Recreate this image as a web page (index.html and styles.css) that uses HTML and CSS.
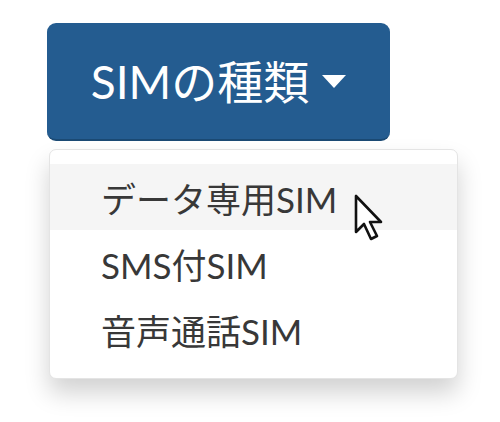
FILE: index.html
```html
<!DOCTYPE html>
<html lang="ja">
<head>
<meta charset="utf-8">
<link rel="stylesheet" href="styles.css">
</head>
<body>
<div class="dropdown">
  <button class="toggle">SIMの種類<span class="caret"></span></button>
  <ul class="menu">
    <li class="item active">データ専用SIM
      <svg class="cursor" width="34" height="52" viewBox="0 0 17 26"><path d="M1 1 L1 19 L5 15 L8.5 22.5 L11.5 21 L8 14 L13.5 14 Z" fill="#fff" stroke="#111" stroke-width="1.3" stroke-linejoin="round"/></svg>
    </li>
    <li class="item">SMS付SIM</li>
    <li class="item">音声通話SIM</li>
  </ul>
</div>
</body>
</html>
```
FILE: styles.css
```css
html, body {
  margin: 0;
  padding: 0;
  background: #fff;
}
body {
  font-family: Lato, "Noto Sans CJK JP", sans-serif;
  min-height: 422px;
}
.dropdown {
  padding: 23px 0 0 47px;
  width: 412px;
}
.toggle {
  display: flex;
  align-items: center;
  justify-content: center;
  width: 343px;
  height: 118px;
  box-sizing: border-box;
  background: #245c90;
  border: none;
  border-bottom: 2px solid #1b4a74;
  border-radius: 9px;
  color: #fff;
  font-family: Lato, "Noto Sans CJK JP", sans-serif;
  font-size: 46px;
  padding: 0 0 4px 0;
  margin: 0;
}
.caret {
  width: 0;
  height: 0;
  border-left: 12px solid transparent;
  border-right: 12px solid transparent;
  border-top: 13px solid #fff;
  margin-left: 13px;
  margin-top: 4px;
}
.menu {
  list-style: none;
  margin: 8px 0 0 2px;
  padding: 14px 0 16px 0;
  width: 409px;
  box-sizing: border-box;
  background: #fff;
  border: 1px solid #e4e4e4;
  border-radius: 7px;
  box-shadow: 0 14px 24px rgba(0, 0, 0, 0.18);
}
.item {
  position: relative;
  height: 66px;
  display: flex;
  align-items: center;
  padding-left: 51px;
  font-size: 35px;
  color: #383838;
}
.item.active {
  background: #f5f5f5;
}
.cursor {
  position: absolute;
  left: 304px;
  top: 30px;
}
```
